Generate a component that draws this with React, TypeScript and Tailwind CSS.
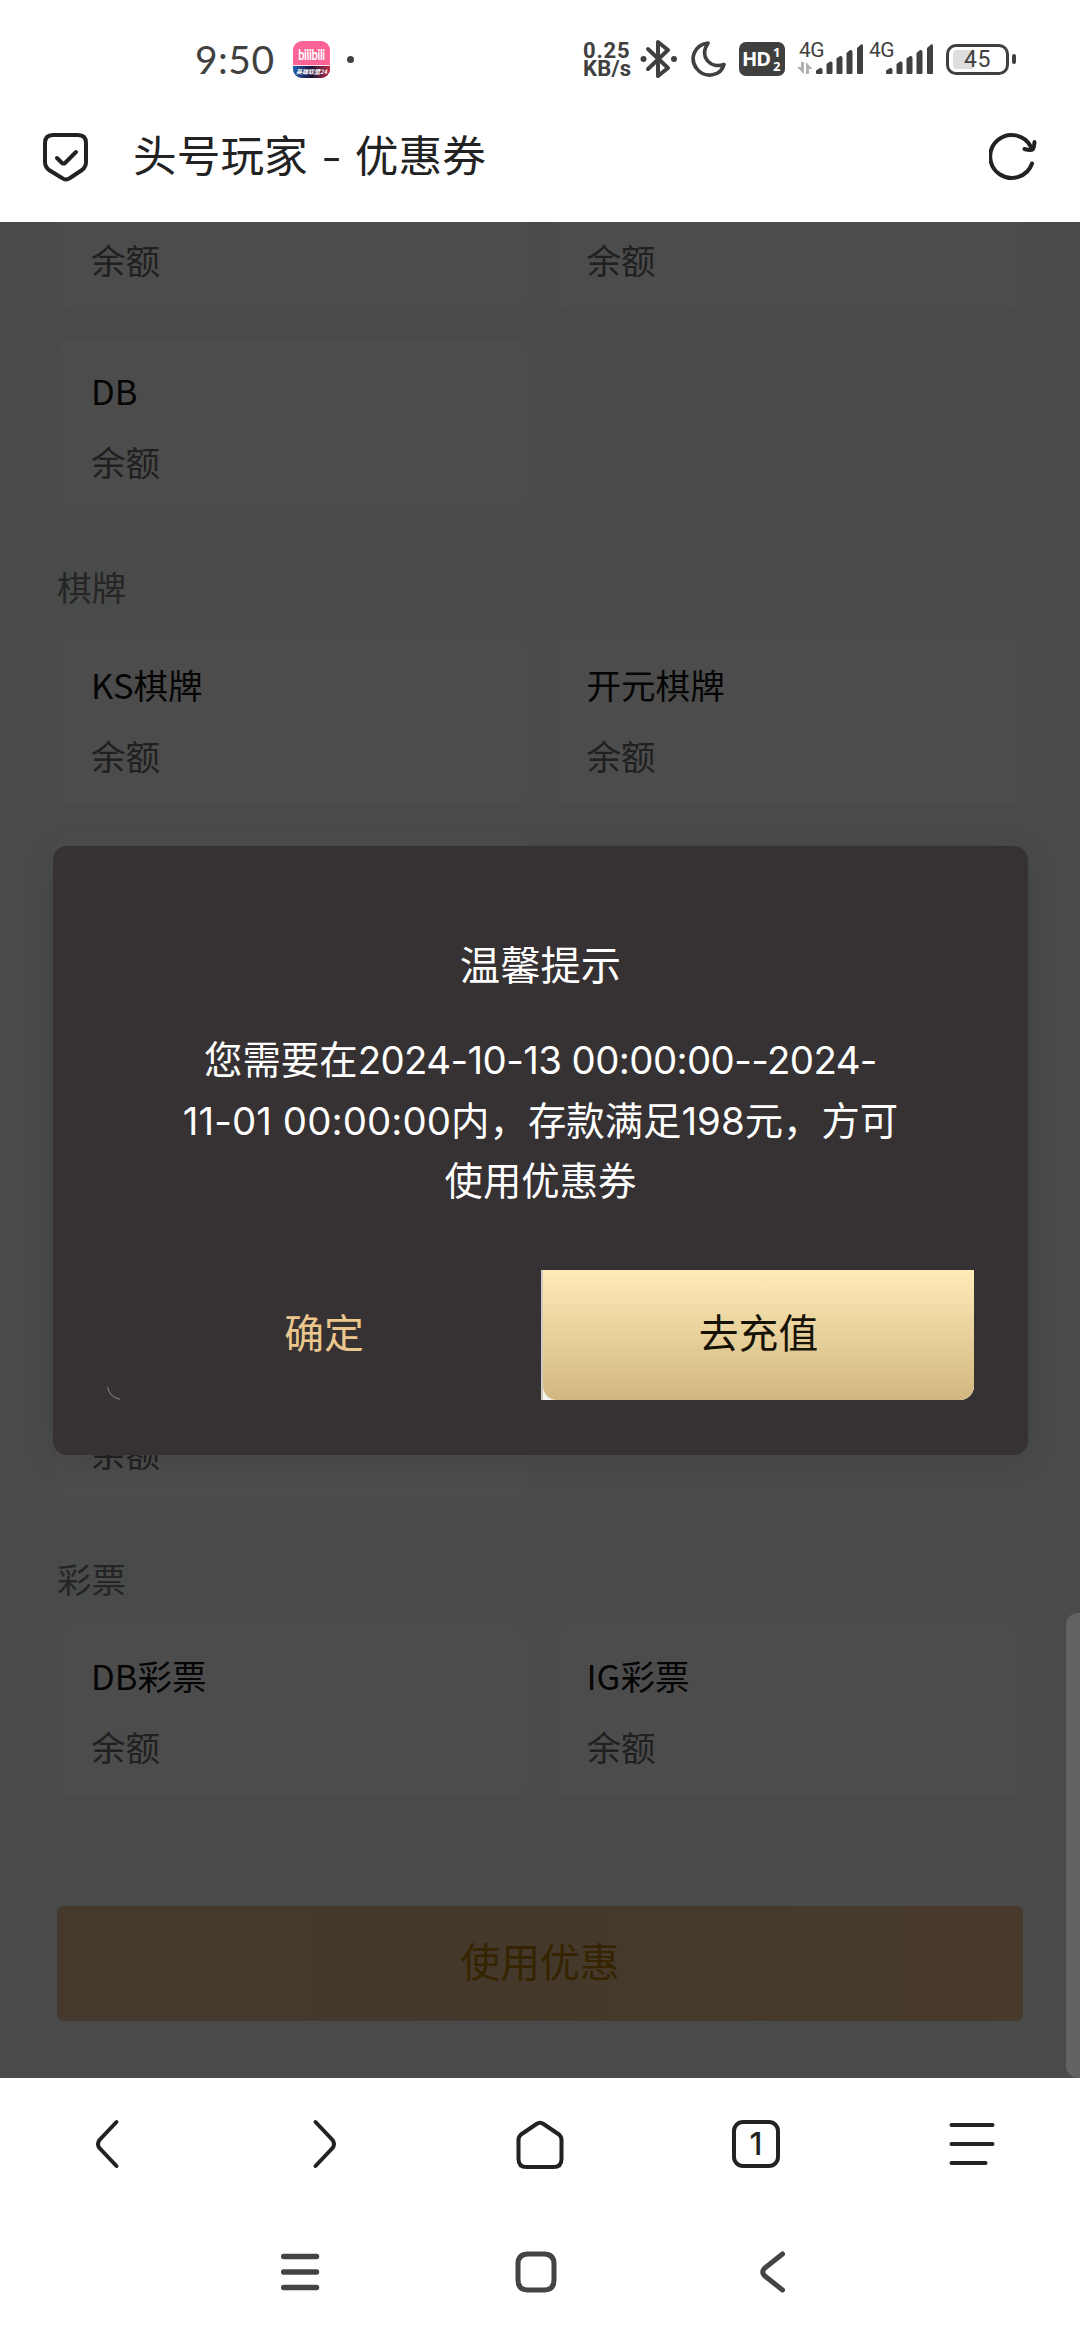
import type { ReactNode } from "react";

type Wallet = { name: string };

const sections: { title: string; rows: Wallet[][] }[] = [
  { title: "", rows: [[{ name: "" }, { name: "" }], [{ name: "DB" }]] },
  { title: "棋牌", rows: [[{ name: "KS棋牌" }, { name: "开元棋牌" }], [{ name: "" }]] },
  { title: "", rows: [[{ name: "" }, { name: "" }], [{ name: "" }]] },
  { title: "彩票", rows: [[{ name: "DB彩票" }, { name: "IG彩票" }]] },
];

function Signal({ className }: { className?: string }) {
  return (
    <svg className={className} width="48" height="32" viewBox="0 0 48 32" fill="#404040">
      <path d="M0 27.5 L4 25 Q6.500 24.500 6.500 27 V30 Q6.500 31 5.500 31 H1 Q0 31 0 30 Z" />
      <path d="M10.500 21 L14 18.500 Q16.500 18 16.500 20 V30 Q16.500 31 15.500 31 H11.500 Q10.500 31 10.500 30 Z" />
      <path d="M20.500 15.500 L24 13 Q26.500 12.500 26.500 15 V30 Q26.500 31 25.500 31 H21.500 Q20.500 31 20.500 30 Z" />
      <path d="M30.500 10 L34 7 Q36.500 6.500 36.500 9 V30 Q36.500 31 35.500 31 H31.500 Q30.500 31 30.500 30 Z" />
      <path d="M41 5 L45 1.500 Q47 0.500 47 3 V30 Q47 31 46 31 H42 Q41 31 41 30 Z" />
    </svg>
  );
}

function StatusBar() {
  return (
    <header className="flex h-[118px] items-center pl-[195px] text-[#404040]">
      <span className="w-[98px] font-['Lato'] text-[39px] leading-none tracking-[0.5px]">9:50</span>
      <span className="flex h-[37px] w-[37px] flex-col overflow-hidden rounded-[9px] bg-[#fc6496] text-center text-white">
        <span className="flex h-[25px] items-center justify-center border-b border-white/80 pt-1 font-['Lato'] text-[11px] leading-none font-bold tracking-[-0.3px]">
          <span className="[transform:scaleY(1.3)]">bilibili</span>
        </span>
        <span className="flex h-3 items-center justify-center bg-gradient-to-r from-[#1764b8] via-[#191237] to-[#c42443] text-[6px] leading-none font-bold whitespace-nowrap italic">
          英雄联盟24
        </span>
      </span>
      <span className="ml-[17px] h-[7px] w-[7px] rounded-full bg-[#404040]" />

      <div className="ml-[229px] w-[57px] pt-0.5 font-['Roboto'] text-[22px] leading-[18px] font-bold">
        <div className="tracking-[0.8px]">0.25</div>
        <div className="tracking-[0.2px]">KB/s</div>
      </div>
      <svg width="38" height="40" viewBox="0 0 38 40" fill="none" stroke="#404040" strokeWidth="4" strokeLinecap="round" strokeLinejoin="round">
        <path d="M8 10 L28 29 L18 37 V3 L28 11 L8 30" />
        <circle cx="3.500" cy="20" r="3" fill="#404040" stroke="none" />
        <circle cx="34" cy="20" r="3" fill="#404040" stroke="none" />
      </svg>
      <svg className="ml-[12px]" width="38" height="38" viewBox="0 0 38 38" fill="none" stroke="#404040" strokeWidth="3.600" strokeLinejoin="round">
        <path d="M18 3 C4 5 -1 19 7 29 C15 39 31 36 34 24.500 C20 29 9 17 18 3 Z" />
      </svg>
      <span className="ml-[11px] flex h-[34px] w-[46px] items-center rounded-[7px] bg-[#404040] pl-[3px] font-['Open_Sans'] font-bold text-white">
        <span className="w-[31px] text-[20px] leading-none tracking-[-1px]">HD</span>
        <span className="text-[13px] leading-[14px]">
          1<br />2
        </span>
      </span>
      <div className="relative ml-[12px] h-8 w-[66px]">
        <span className="absolute -top-1 left-0.5 font-['Roboto'] text-[21px] leading-[22px] tracking-[-0.5px]">4G</span>
        <svg className="absolute top-[19px] left-0" width="16" height="12" viewBox="0 0 16 12" fill="#b0b0b0">
          <path d="M4 0 H7 V12 L0 5 H4 Z M9 0 L15.500 7 H12 V12 H9 Z" />
        </svg>
        <Signal className="absolute top-0 left-[19px]" />
      </div>
      <div className="relative ml-1 h-8 w-[66px]">
        <span className="absolute -top-1 left-0.5 font-['Roboto'] text-[21px] leading-[22px] tracking-[-0.5px]">4G</span>
        <Signal className="absolute top-0 left-[19px]" />
      </div>
      <div className="relative ml-[13px] flex h-[31px] w-[63px] items-center justify-center rounded-[10px] border-[3px] border-[#404040]">
        <span className="absolute top-[3px] left-1 h-[19px] w-[20px] rounded-l-[4px] bg-[#dedede]" />
        <span className="relative font-['Roboto'] text-[23px] leading-none tracking-[0.5px]">45</span>
      </div>
      <span className="ml-[3px] h-[10px] w-1 rounded-sm bg-[#404040]" />
    </header>
  );
}

function TitleBar() {
  return (
    <div className="flex h-[104px] items-start justify-between pr-[43px] pl-[42px] text-[#222]">
      <div className="flex items-start">
        <svg className="mt-[14px]" width="48" height="50" viewBox="0 0 48 50" fill="none" stroke="#222" strokeWidth="4" strokeLinecap="round" strokeLinejoin="round">
          <path d="M11 3 H36 Q44 3 44 11 V30 Q44 35 40 38 L28 46 Q24 49 20 46 L7 38 Q3 35 3 30 V11 Q3 3 11 3 Z" />
          <path d="M15 26 L20 31 Q21.500 32 23 31 L34 20" />
        </svg>
        <h1 className="ml-[43px] flex text-[43.700px] leading-[71px] whitespace-pre">
          头号玩家
          <span className="flex w-[47px] justify-center">
            <span className="[transform:scaleX(1.3)]">-</span>
          </span>
          优惠券
        </h1>
      </div>
      <svg className="mt-[13px]" width="48" height="50" viewBox="0 0 48 50" fill="none" stroke="#222" strokeWidth="4" strokeLinecap="round" strokeLinejoin="round">
        <path d="M43 32.500 A21.500 21.500 0 1 1 42 16" />
        <path d="M35.500 18 Q42 20 44 18 Q45 16.500 45.500 11" />
      </svg>
    </div>
  );
}

function WalletCard({ name }: Wallet) {
  return (
    <div className="h-[172.800px] rounded-[15px] bg-white px-[34px] pt-[27px] text-[34.560px] leading-[48px]">
      <div className="h-12 text-[#111]">{name}</div>
      <div className="mt-[23px] text-[#6c6c6c]">余额</div>
    </div>
  );
}

function WalletPage() {
  return (
    <div className="-mt-[85px] px-[57px]">
      {sections.map((section, i) => (
        <section key={i}>
          {i > 0 && (
            <h2 className="h-[121.200px] pt-[51px] text-[34.560px] leading-[48px] text-[#7c7e7c]">{section.title}</h2>
          )}
          <div className="flex flex-col gap-[28.800px]">
            {section.rows.map((row, r) => (
              <div key={r} className="grid grid-cols-2 gap-[25px]">
                {row.map((wallet, w) => (
                  <WalletCard key={w} name={wallet.name} />
                ))}
              </div>
            ))}
          </div>
        </section>
      ))}
      <button className="mt-[109px] block h-[115px] w-full rounded-md bg-gradient-to-r from-[#e8bf9a] via-[#e3bd91] to-[#f0c496] pb-[6px] text-[39.800px] leading-[60px] text-[#b47b00]">
        使用优惠
      </button>
    </div>
  );
}

function Digits({ children, className }: { children: ReactNode; className: string }) {
  return <span className={`font-['Inter'] ${className}`}>{children}</span>;
}

function PromptDialog() {
  return (
    <div className="absolute top-[624px] left-[53px] flex h-[609px] w-[975px] flex-col rounded-[14px] bg-[#363132] px-[54px] pb-[55px] text-center text-white shadow-[0_6px_30px_rgba(0,0,0,0.1)]">
      <h3 className="pt-[87px] text-[40.320px] leading-[60px]">温馨提示</h3>
      <div className="mt-[34px] text-[38.400px] leading-[60px] whitespace-nowrap">
        <div className="h-[60.500px]">
          您需要在<Digits className="tracking-[-0.600px]">2024-10-13 00:00:00--2024-</Digits>
        </div>
        <div className="h-[60.500px]">
          <Digits className="tracking-[0.100px]">11-01 00:00:00</Digits>内，存款满足
          <Digits className="tracking-[0px]">198</Digits>元，方可
        </div>
        <div className="h-[60.500px]">使用优惠券</div>
      </div>
      <div className="mt-auto flex h-[130px] text-[39.800px] leading-[60px]">
        <button className="relative flex-1 pb-[8px] text-[#ebc78d]">
          确定
          <svg className="absolute bottom-0 left-0" width="16" height="16" viewBox="0 0 16 16" fill="none" stroke="#8b8888">
            <path d="M0.700 3 Q2 13 13 15.300" />
          </svg>
        </button>
        <div className="w-[433px] border-l-2 border-[#cecbc6] bg-[#f5f3ed] [border-bottom-right-radius:14px]">
          <button className="h-full w-full rounded-b-[14px] bg-gradient-to-b from-[#ffebb7] to-[#d1b77f] pb-[8px] text-[#171207]">
            去充值
          </button>
        </div>
      </div>
    </div>
  );
}

function BrowserNav() {
  return (
    <nav className="grid h-[132px] grid-cols-5 items-center justify-items-center text-[#222]">
      <svg width="48" height="52" viewBox="0 0 48 52" fill="none" stroke="currentColor" strokeWidth="4" strokeLinecap="round">
        <path d="M32.500 4 L15.500 22 Q12.500 26 15.500 30 L32.500 48" />
      </svg>
      <svg width="48" height="52" viewBox="0 0 48 52" fill="none" stroke="currentColor" strokeWidth="4" strokeLinecap="round">
        <path d="M15.500 4 L32.500 22 Q35.500 26 32.500 30 L15.500 48" />
      </svg>
      <svg width="52" height="52" viewBox="0 0 52 52" fill="none" stroke="currentColor" strokeWidth="4" strokeLinejoin="round">
        <path d="M22.500 6 Q26 3.500 29.500 6 L45 16.500 Q47.500 18.500 47.500 22 V41 Q47.500 49 39.500 49 H12.500 Q4.500 49 4.500 41 V22 Q4.500 18.500 7 16.500 Z" />
      </svg>
      <span className="flex h-12 w-12 items-center justify-center rounded-[11px] border-4 border-[#222] pb-[2px] font-['Inter'] text-[31px] leading-none font-medium">
        1
      </span>
      <svg width="48" height="52" viewBox="0 0 48 52" fill="none" stroke="currentColor" strokeWidth="4" strokeLinecap="round">
        <path d="M3.500 7 H44.500 M3.500 26 H44.500 M3.500 45 H37.500" />
      </svg>
    </nav>
  );
}

function SystemNav() {
  return (
    <nav className="flex h-[124px] items-center pl-[280px] text-[#444]">
      <svg width="40" height="44" viewBox="0 0 40 44" fill="none" stroke="currentColor" strokeWidth="5.300" strokeLinecap="round">
        <path d="M3.600 6.500 H36.600 M3.600 22 H36.600 M3.600 37.500 H36.600" />
      </svg>
      <svg className="ml-[194px]" width="44" height="44" viewBox="0 0 44 44" fill="none" stroke="currentColor" strokeWidth="5">
        <path d="M14 4 H30 Q40 4 40 14 V30 Q40 40 30 40 H14 Q4 40 4 30 V14 Q4 4 14 4 Z" />
      </svg>
      <svg className="ml-[200px]" width="30" height="44" viewBox="0 0 30 44" fill="none" stroke="currentColor" strokeWidth="5" strokeLinecap="round">
        <path d="M24.500 4 L7.500 17.500 Q2 22 7.500 26.500 L24.500 40" />
      </svg>
    </nav>
  );
}

export default function App() {
  return (
    <div className="h-[2340px] w-[1080px] overflow-hidden bg-white font-['Noto_Sans_CJK_SC',sans-serif]">
      <StatusBar />
      <TitleBar />
      <main className="relative h-[1856px] overflow-hidden bg-[#f3faf7]">
        <WalletPage />
        <div className="absolute inset-0 bg-black/70" />
        <PromptDialog />
        <div className="absolute right-0 bottom-0 h-[465px] w-[14px] rounded-l-[12px] bg-[#626362]" />
      </main>
      <BrowserNav />
      <SystemNav />
    </div>
  );
}
